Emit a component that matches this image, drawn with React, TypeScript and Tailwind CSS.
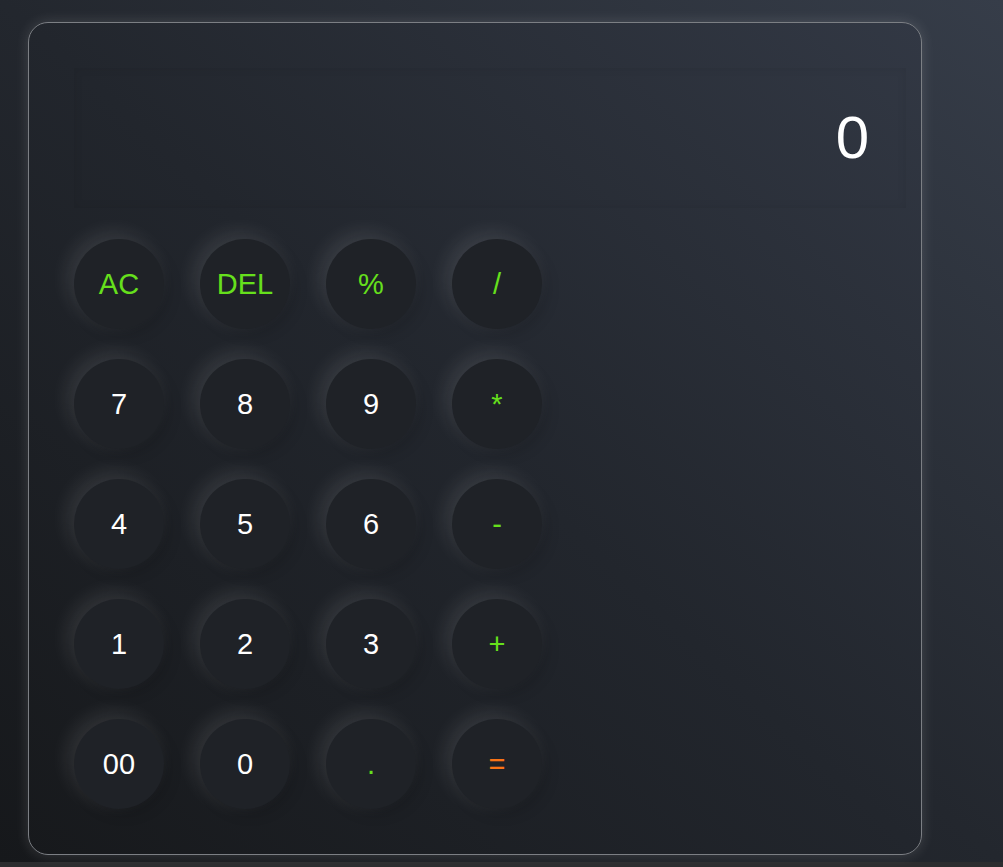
import React, { useState } from "react";

type Key = { label: string; tone: "op" | "num" | "eq" };

const keys: Key[] = [
  { label: "AC", tone: "op" },
  { label: "DEL", tone: "op" },
  { label: "%", tone: "op" },
  { label: "/", tone: "op" },
  { label: "7", tone: "num" },
  { label: "8", tone: "num" },
  { label: "9", tone: "num" },
  { label: "*", tone: "op" },
  { label: "4", tone: "num" },
  { label: "5", tone: "num" },
  { label: "6", tone: "num" },
  { label: "-", tone: "op" },
  { label: "1", tone: "num" },
  { label: "2", tone: "num" },
  { label: "3", tone: "num" },
  { label: "+", tone: "op" },
  { label: "00", tone: "num" },
  { label: "0", tone: "num" },
  { label: ".", tone: "op" },
  { label: "=", tone: "eq" },
];

const toneClass = {
  op: "text-[#66e01c]",
  num: "text-white",
  eq: "text-[#f97316]",
};

const App = () => {
  const [value, setValue] = useState("0");

  const press = (k: string) => {
    if (k === "AC") return setValue("0");
    if (k === "DEL") return setValue((v) => (v.length > 1 ? v.slice(0, -1) : "0"));
    if (k === "=") {
      try {
        // eslint-disable-next-line no-new-func
        const r = Function(`return (${value.replace(/%/g, "/100")})`)();
        setValue(String(r));
      } catch {
        setValue("Error");
      }
      return;
    }
    setValue((v) => (v === "0" && k !== "." ? k : v + k));
  };

  return (
    <div className="min-h-screen bg-[#2c2d2f] font-['Liberation_Sans',Arial,sans-serif]">
      <div className="h-[862px] bg-gradient-to-tr from-[#16181b] via-[#23272e] to-[#363d49] pt-[22px] pl-[28px]">
        <div className="w-[894px] h-[833px] rounded-[20px] border border-[#7c7f84] bg-gradient-to-tr from-[#17191c] via-[#22262d] to-[#323844] shadow-[0_0_14px_rgba(255,255,255,0.14)] pt-[45px] pl-[45px] pr-[15px]">
          <div className="h-[140px] flex items-center justify-end pr-[37px] shadow-[inset_0_0_10px_rgba(0,0,0,0.08)]">
            <span className="text-[60px] leading-none text-white">{value}</span>
          </div>
          <div className="mt-[31px] grid grid-cols-[repeat(4,90px)] gap-x-[36px] gap-y-[30px]">
            {keys.map((k) => (
              <button
                key={k.label}
                onClick={() => press(k.label)}
                className={`w-[90px] h-[90px] rounded-full bg-[#1f2227] flex items-center justify-center text-[29px] leading-none shadow-[-6px_-6px_20px_rgba(255,255,255,0.11),5px_5px_14px_rgba(0,0,0,0.15)] ${toneClass[k.tone]}`}
              >
                {k.label}
              </button>
            ))}
          </div>
        </div>
      </div>
    </div>
  );
};

export default App;
